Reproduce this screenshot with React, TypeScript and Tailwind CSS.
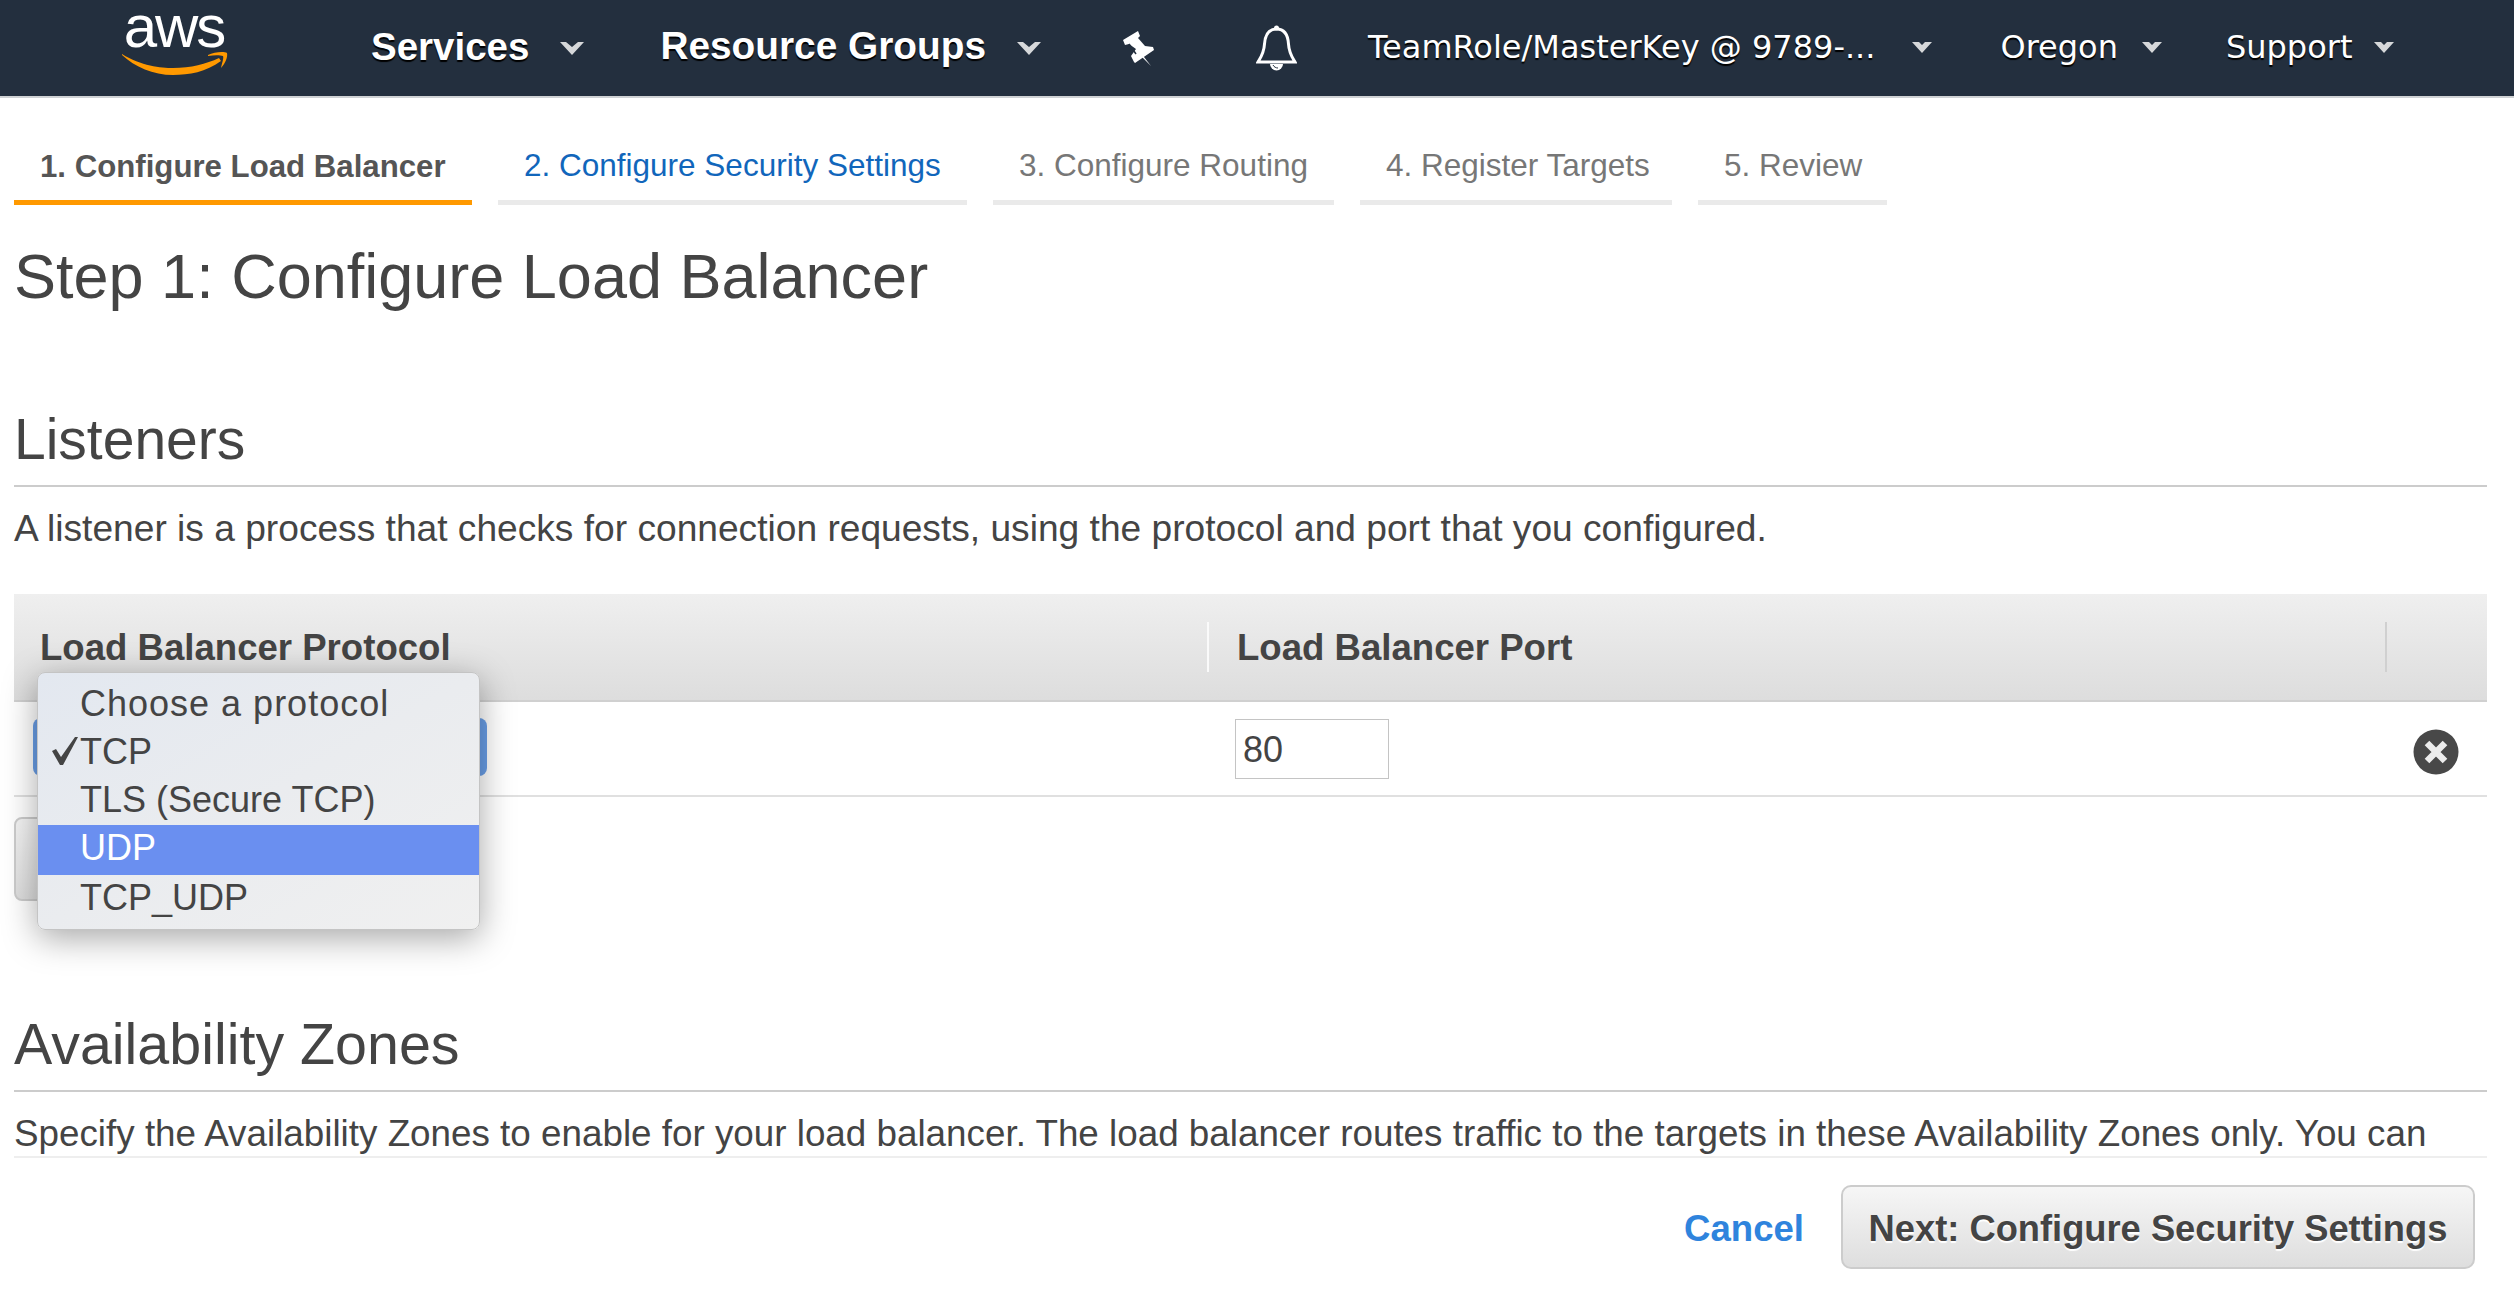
const sans = "font-['Liberation_Sans',Arial,sans-serif]";
const nav = "font-['DejaVu_Sans',Verdana,sans-serif]";

function BigCaret({ className }: { className: string }) {
  return (
    <svg viewBox="0 0 24 13" className={`h-[13px] w-[24px] ${className}`}>
      <path d="M0 0 L6 0 L12 5 L18 0 L24 0 L12 13 Z" fill="#d6d8da" />
    </svg>
  );
}

function SmallCaret({ className }: { className: string }) {
  return (
    <svg viewBox="0 0 20 11" className={`h-[11px] w-[20px] ${className}`}>
      <path d="M0 0 L7 0 L10 3 L13 0 L20 0 L10 11 Z" fill="#d6d8da" />
    </svg>
  );
}

function AwsLogo() {
  return (
    <div className="mb-[6px] flex w-[106px] flex-col items-center">
      <span className="h-[36px] text-[60px] leading-[28px] tracking-[-2px] text-white">aws</span>
      <svg viewBox="0 0 107 28" className="h-[28px] w-[107px]">
        <path d="M1 5 C 20 17, 40 19, 52 19 C 70 19, 85 15, 98 9 L100 12 C 85 23, 68 26, 52 26 C 32 26, 14 18, 1 6 Z" fill="#f90" />
        <path d="M87 6 C 93 3, 103 2, 106 4 C 107 8, 104 15, 100 19 C 101 14, 103 9, 102 7 C 99 6, 93 6, 87 7 Z" fill="#f90" />
      </svg>
    </div>
  );
}

function PinIcon() {
  return (
    <svg viewBox="0 0 31 35" className="ml-[82px] h-[35px] w-[31px]">
      <path d="M0 9 L15 0 L17 5 L15 7 L22 15 L30 16 L31 19 L12 32 L11 31 L8 25 L13 18 L6 13 L2 14 Z" fill="white" />
      <path d="M17 24 L21 26 L28 35 Z" fill="white" />
      <path d="M6 13 L13 23" stroke="#232f3e" strokeWidth="1.5" />
    </svg>
  );
}

function BellIcon() {
  return (
    <svg viewBox="0 0 41 46" className="ml-[102px] h-[46px] w-[41px]" fill="none">
      <circle cx="20.5" cy="3" r="2.5" fill="white" />
      <path
        d="M20.5 4 C 12 4, 9 11, 8.5 19 C 8 28, 5 32, 2 37 L39 37 C 36 32, 33 28, 32.5 19 C 32 11, 29 4, 20.5 4 Z"
        stroke="white"
        strokeWidth="3"
      />
      <path d="M14 39 A 6.5 6.5 0 0 0 27 39 Z" fill="white" />
      <path d="M17 40 C 18 42, 20 43, 22 43" stroke="#232f3e" strokeWidth="1" />
    </svg>
  );
}

function TopNav() {
  return (
    <nav className="flex h-[98px] items-center border-b-2 border-[#cfd2d4] bg-[#232f3e] pl-[121px] text-white">
      <AwsLogo />
      <span className="mb-[3px] ml-[144px] text-[38.5px] font-bold [text-shadow:0_2px_1px_#000]">Services</span>
      <BigCaret className="ml-[31px]" />
      <span className="mb-[3px] ml-[76px] text-[38.8px] font-bold [text-shadow:0_2px_1px_#000]">Resource Groups</span>
      <BigCaret className="ml-[31px]" />
      <PinIcon />
      <BellIcon />
      <div className={`mb-[2px] flex items-center text-[32px] [text-shadow:0_2px_1px_#000] ${nav}`}>
        <span className="ml-[71px]">TeamRole/MasterKey @ 9789-...</span>
        <SmallCaret className="ml-[37px]" />
        <span className="ml-[68px]">Oregon</span>
        <SmallCaret className="ml-[24px]" />
        <span className="ml-[64px]">Support</span>
        <SmallCaret className="ml-[22px]" />
      </div>
    </nav>
  );
}

const steps = [
  { label: "1. Configure Load Balancer", width: "w-[458px]", text: "pt-[4px] font-bold text-[31.2px] text-[#555]", bar: "border-[#f90]" },
  { label: "2. Configure Security Settings", width: "w-[469px]", text: "pt-[2px] text-[31.5px] text-[#1166bb]", bar: "border-[#eaeaea]" },
  { label: "3. Configure Routing", width: "w-[341px]", text: "pt-[2px] text-[31.5px] text-[#777]", bar: "border-[#eaeaea]" },
  { label: "4. Register Targets", width: "w-[312px]", text: "pt-[2px] text-[31.5px] text-[#777]", bar: "border-[#eaeaea]" },
  { label: "5. Review", width: "w-[189px]", text: "pt-[2px] text-[31.5px] text-[#777]", bar: "border-[#eaeaea]" },
];

function Tabs() {
  return (
    <div className="mt-[42px] flex gap-[26px] pl-[14px]">
      {steps.map((s) => (
        <div key={s.label} className={`h-[65px] border-b-[5px] pl-[26px] leading-[46px] ${s.width} ${s.text} ${s.bar}`}>
          {s.label}
        </div>
      ))}
    </div>
  );
}

function ProtocolMenu() {
  return (
    <div className="absolute left-[37px] top-[672px] w-[443px] rounded-[8px] border border-[#c4c4c4] bg-gradient-to-br from-[#e3e8f0] via-[#eaecef] to-[#f0f0f0] pb-[6px] pt-[8px] text-[36px] text-[#444] shadow-[0_8px_34px_rgba(0,0,0,0.35)]">
      <div className="h-[48px] pl-[42px] leading-[46px] tracking-[1px]">Choose a protocol</div>
      <div className="relative h-[48px] pl-[42px] leading-[46px]">
        <svg viewBox="0 0 26 28" className="absolute left-[14px] top-[8px] h-[28px] w-[26px]">
          <path d="M0 14 L4 12 L9 20 L23 0 L26 0 L11 28 L8 28 Z" fill="#444" />
        </svg>
        TCP
      </div>
      <div className="h-[48px] pl-[42px] leading-[46px]">TLS (Secure TCP)</div>
      <div className="h-[50px] bg-[#6a8ff0] pl-[42px] leading-[46px] text-white">UDP</div>
      <div className="h-[48px] pl-[42px] leading-[46px]">TCP_UDP</div>
    </div>
  );
}

function ListenersTable() {
  return (
    <div className="mt-[42px]">
      <div className="flex h-[108px] items-center border-b-2 border-[#d0d0d0] bg-gradient-to-b from-[#efefef] to-[#dddddd] text-[36.6px] font-bold text-[#444]">
        <div className="flex h-[50px] w-[1193px] items-center pl-[26px] pt-[3px]">Load Balancer Protocol</div>
        <div className="flex h-[50px] w-[1178px] items-center border-l-2 border-[#fafafa] pl-[28px] pt-[3px]">Load Balancer Port</div>
        <div className="h-[50px] border-l-2 border-[#d0d0d0]" />
      </div>
      <div className="flex h-[95px] items-center border-b-2 border-[#e0e0e0]">
        <div className="mb-[4px] ml-[19px] h-[58px] w-[454px] rounded-[8px] bg-[#6a9fe8]" />
        <div className="ml-[748px] flex h-[60px] w-[154px] items-center border border-[#c4c4c4] pl-[7px] pt-[2px] text-[36px] text-[#444]">80</div>
        <svg viewBox="0 0 46 46" className="ml-[1024px] mt-[6px] h-[46px] w-[46px] blur-[0.7px]">
          <circle cx="23" cy="23" r="22.5" fill="#484848" />
          <path d="M14 14 L32 32 M32 14 L14 32" stroke="#ececec" strokeWidth="6.5" />
        </svg>
      </div>
    </div>
  );
}

export default function App() {
  return (
    <div className={`relative h-[1300px] w-[2514px] overflow-hidden bg-white text-[#444] ${sans}`}>
      <TopNav />
      <Tabs />
      <main className="pl-[14px] pr-[27px]">
        <h1 className="mt-[31px] text-[63px] leading-[80px]">Step 1: Configure Load Balancer</h1>
        <h2 className="mt-[89px] border-b-2 border-[#ccc] pb-[12px] text-[57px] leading-[68px]">Listeners</h2>
        <p className="mt-[17px] text-[37.15px] leading-[48px]">
          A listener is a process that checks for connection requests, using the protocol and port that you configured.
        </p>
        <ListenersTable />
        <div className="mt-[20px] h-[84px] w-[400px] rounded-[8px] border-2 border-[#ccc] bg-gradient-to-b from-[#f4f4f4] to-[#dedede]" />
        <h2 className="mt-[109px] border-b-2 border-[#ccc] pb-[12px] text-[57.4px] leading-[68px]">Availability Zones</h2>
        <p className="mt-[20px] whitespace-nowrap border-b-2 border-[#eee] text-[36.8px] leading-[44px]">
          Specify the Availability Zones to enable for your load balancer. The load balancer routes traffic to the targets in these Availability Zones only. You can
        </p>
      </main>
      <footer className="mt-[27px] flex items-center justify-end pr-[39px] font-bold">
        <a className="mr-[37px] mt-[5px] text-[36.6px] text-[#2f84dd]">Cancel</a>
        <button className="h-[84px] w-[634px] rounded-[10px] border-2 border-[#ccc] bg-gradient-to-b from-[#f6f6f6] to-[#dedede] pt-[5px] text-[36.3px] text-[#444] [text-shadow:0_2px_1px_#fff]">
          Next: Configure Security Settings
        </button>
      </footer>
      <ProtocolMenu />
    </div>
  );
}
